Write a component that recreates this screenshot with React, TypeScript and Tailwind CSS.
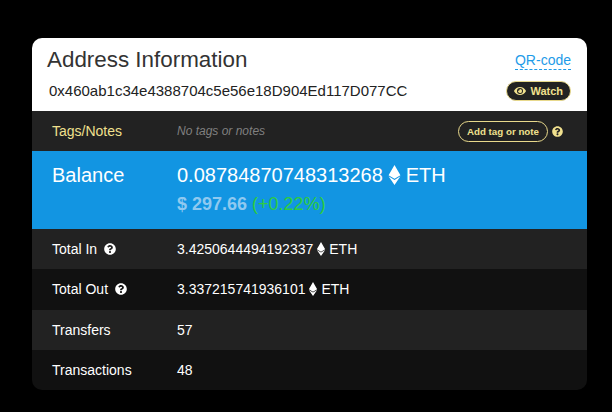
import { FaEthereum, FaEye, FaQuestionCircle } from "react-icons/fa"

const rows = [
  { label: "Total In", help: true, value: "3.4250644494192337", eth: true, bg: "bg-[#222222]", h: "h-10" },
  { label: "Total Out", help: true, value: "3.337215741936101", eth: true, bg: "bg-[#111111]", h: "h-[41px] pb-px" },
  { label: "Transfers", help: false, value: "57", eth: false, bg: "bg-[#222222]", h: "h-10" },
  { label: "Transactions", help: false, value: "48", eth: false, bg: "bg-[#111111]", h: "h-10" },
]

export default function App() {
  return (
    <div className="h-[412px] w-[612px] bg-black pl-8 pt-[38px] font-['Liberation_Sans',Arial,sans-serif]">
      <div className="w-[555px] overflow-hidden rounded-[10px]">
        <div className="flex h-[73px] justify-between bg-white pl-[15px] pr-4">
          <div>
            <h1 className="mt-[7px] text-[22.4px] leading-[30px] text-[#333333]">Address Information</h1>
            <p className="mt-1.5 pl-0.5 text-[15px] leading-5 text-[#222222]">0x460ab1c34e4388704c5e56e18D904Ed117D077CC</p>
          </div>
          <div className="flex flex-col items-end">
            <a className="mt-[13px] border-b border-dashed border-[#1e9be8] text-sm leading-[18px] text-[#1e9be8]">QR-code</a>
            <button className="mt-[11px] flex h-5 items-center gap-1 rounded-full border border-[#e8d98c] bg-[#222222] px-[7px] text-[11px] font-bold text-[#f0e08e]">
              <FaEye className="h-3 w-3" />
              Watch
            </button>
          </div>
        </div>

        <div className="flex h-10 items-center bg-[#222222] pl-5 pr-6 text-xs">
          <span className="w-[125px] text-sm text-[#f0e08e]">Tags/Notes</span>
          <span className="flex-1 italic text-[#808080]">No tags or notes</span>
          <button className="flex h-[21px] items-center rounded-full border border-[#e8d98c] px-[8px] text-[9.75px] font-bold text-[#f0e08e]">
            Add tag or note
          </button>
          <FaQuestionCircle className="ml-1 h-[11px] w-[11px] text-[#f0e08e]" />
        </div>

        <div className="flex h-[78px] bg-[#1295e2] pl-5 pt-[13px]">
          <span className="w-[125px] text-xl leading-[22px] text-white">Balance</span>
          <div>
            <div className="flex items-center text-xl leading-[22px] text-white">
              0.08784870748313268
              <FaEthereum className="mx-[5px] h-5 w-[13px]" />
              ETH
            </div>
            <div className="mt-2 text-lg leading-5">
              <span className="font-bold text-[#8fc9f0]">$ 297.66</span>{" "}
              <span className="text-[#2ecc40]">(+0.22%)</span>
            </div>
          </div>
        </div>

        {rows.map((row) => (
          <div key={row.label} className={`flex items-center pl-5 text-sm text-white ${row.bg} ${row.h}`}>
            <span className="flex w-[125px] items-center gap-[7px]">
              {row.label}
              {row.help && <FaQuestionCircle className="h-3 w-3" />}
            </span>
            <span className="flex items-center">
              {row.value}
              {row.eth && <FaEthereum className="mx-[3px] h-[14px] w-[10px]" />}
              {row.eth && "ETH"}
            </span>
          </div>
        ))}
      </div>
    </div>
  )
}
